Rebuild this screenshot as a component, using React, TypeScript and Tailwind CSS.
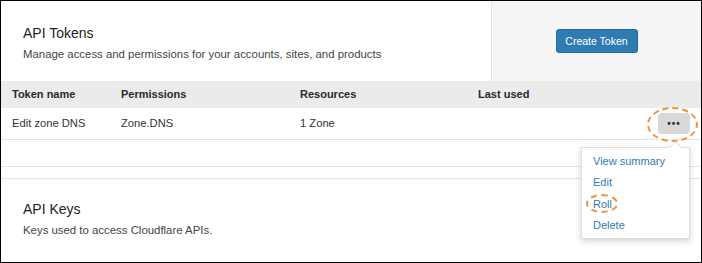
import React from "react";

const font = { fontFamily: '"Liberation Sans", Arial, sans-serif' };

const columns = ["Token name", "Permissions", "Resources", "Last used"];
const menuItems = ["View summary", "Edit", "Roll", "Delete"];

export default function App() {
  return (
    <div
      className="relative w-[702px] h-[263px] overflow-hidden bg-white border border-black text-[#333]"
      style={font}
    >
      {/* API Tokens card */}
      <div className="border-b border-[#e3e3e3]">
        <div className="flex h-[80px]">
          <div className="flex-1 pl-[22px] pt-[23px]">
            <h2 className="text-[14px] leading-[18px] text-[#222]">API Tokens</h2>
            <p className="mt-[4px] text-[11.4px] leading-[16px] text-[#444]">
              Manage access and permissions for your accounts, sites, and products
            </p>
          </div>
          <div className="w-[210px] bg-[#f5f5f5] border-l border-[#e3e3e3] flex items-center justify-center">
            <button className="h-[24px] w-[82px] rounded-[3px] bg-[#2f7bb4] text-white text-[10.5px] leading-none border border-[#256a9e]">
              Create Token
            </button>
          </div>
        </div>

        <div className="grid grid-cols-[109px_179px_178px_1fr] items-center h-[27px] px-[11px] bg-[#ebebeb] text-[11px] font-bold text-[#2a2a2a]">
          {columns.map((c) => (
            <span key={c}>{c}</span>
          ))}
        </div>

        <div className="grid grid-cols-[109px_179px_178px_1fr] items-center h-[32px] px-[11px] border-b border-[#e3e3e3] text-[11.2px] text-[#333]">
          <span>Edit zone DNS</span>
          <span>Zone.DNS</span>
          <span>1 Zone</span>
          <span className="flex justify-end">
            <span className="w-[32px] h-[21px] rounded-[4px] bg-[#d9d9d9] flex items-center justify-center text-[10px] font-bold tracking-[1px] text-[#333]">
              •••
            </span>
          </span>
        </div>

        <div className="h-[26px]" />
      </div>

      <div className="h-[11px]" />

      {/* API Keys card */}
      <div className="border-t border-[#e3e3e3] pl-[22px] pt-[21px]">
        <h2 className="text-[14px] leading-[18px] text-[#222]">API Keys</h2>
        <p className="mt-[4px] text-[11.4px] leading-[16px] text-[#444]">
          Keys used to access Cloudflare APIs.
        </p>
      </div>

      {/* highlight around the actions button */}
      <div className="absolute left-[646px] top-[106px] w-[51px] h-[35px] rounded-[50%] border-2 border-dashed border-[#f0923c]" />

      {/* dropdown menu */}
      <div className="absolute left-[580px] top-[146px] w-[109px] h-[92px] bg-white border border-[#dedede] shadow-[0_2px_6px_rgba(0,0,0,0.18)]">
        <div className="absolute -top-[5px] left-[89px] w-[9px] h-[9px] rotate-45 bg-white border-l border-t border-[#dedede]" />
        <ul className="relative pt-[3px] pl-[11px] text-[11px] text-[#2f7bb4]">
          {menuItems.map((item) => (
            <li key={item} className="h-[21.3px] leading-[21.3px]">
              {item}
            </li>
          ))}
        </ul>
      </div>

      {/* highlight around Roll */}
      <div className="absolute left-[585px] top-[193px] w-[32px] h-[19px] rounded-[50%] border-2 border-dashed border-[#f0923c]" />
    </div>
  );
}
